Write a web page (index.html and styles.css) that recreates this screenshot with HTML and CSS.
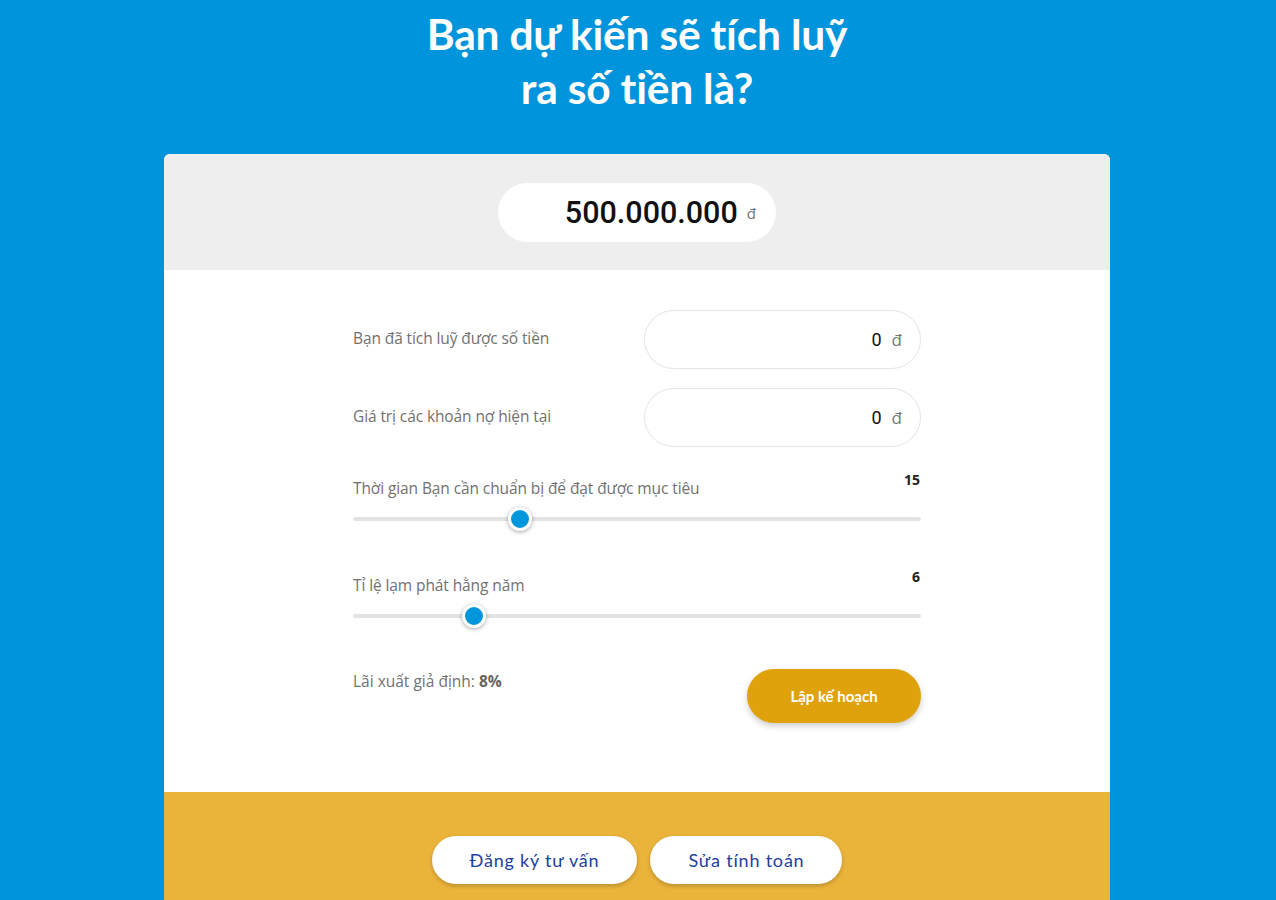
FILE: index.html
```
<!DOCTYPE html>
<html lang="vi">
<head>
	<meta charset="UTF-8">
	<title>Tích luỹ</title>
	<link rel="stylesheet" href="styles.css">
</head>
<body>
	<div class="page">
		<h1 class="title">Bạn dự kiến sẽ tích luỹ<br>ra số tiền là?</h1>

		<section class="card">
			<div class="card-head">
				<div class="goal">
					<span class="goal-num">500.000.000</span>
					<span class="goal-unit">đ</span>
				</div>
			</div>

			<div class="card-body">
				<div class="form">
					<div class="row">
						<label class="label">Bạn đã tích luỹ được số tiền</label>
						<div class="money">
							<span class="money-num">0</span>
							<span class="money-unit">đ</span>
						</div>
					</div>
					<div class="row">
						<label class="label">Giá trị các khoản nợ hiện tại</label>
						<div class="money">
							<span class="money-num">0</span>
							<span class="money-unit">đ</span>
						</div>
					</div>

					<div class="slide">
						<div class="slide-top">
							<label class="label">Thời gian Bạn cần chuẩn bị để đạt được mục tiêu</label>
							<span class="slide-val">15</span>
						</div>
						<input class="range" type="range" min="1" max="50" value="15">
					</div>

					<div class="slide">
						<div class="slide-top">
							<label class="label">Tỉ lệ lạm phát hằng năm</label>
							<span class="slide-val">6</span>
						</div>
						<input class="range" type="range" min="0" max="30" value="6">
					</div>

					<div class="foot-row">
						<p class="rate">Lãi xuất giả định: <b>8%</b></p>
						<button class="btn-plan">Lập kế hoạch</button>
					</div>
				</div>
			</div>

			<div class="card-foot">
				<button class="btn-white">Đăng ký tư vấn</button>
				<button class="btn-white">Sửa tính toán</button>
			</div>
		</section>
	</div>
</body>
</html>
```

FILE: styles.css
```
* {
	margin:0;
	padding:0;
	box-sizing:border-box;
}
html,body {
	height:100%;
	overflow:hidden;
}
body {
	background:#0094dc;
	font-family:"Open Sans","Liberation Sans",sans-serif;
	color:#222;
}
.page {
	width:946px;
	margin:0 auto;
	padding-top:7px;
	position:relative;
	left:-1px;
}
.title {
	text-align:center;
	color:#fff;
	font-family:"Lato","Open Sans",sans-serif;
	font-weight:700;
	font-size:42.5px;
	line-height:54px;
	letter-spacing:-0.2px;
}
.card {
	margin-top:39px;
	background:#fff;
	border-radius:6px;
	overflow:hidden;
}
.card-head {
	height:116px;
	background:#eeeeee;
	display:flex;
	align-items:center;
	justify-content:center;
}
.goal {
	width:278px;
	height:59px;
	background:#fff;
	border-radius:30px;
	display:flex;
	align-items:center;
	justify-content:flex-end;
	padding-right:20px;
	gap:9px;
}
.goal-num {
	font-family:"Roboto","Liberation Sans",sans-serif;
	font-size:30.5px;
	font-weight:500;
	color:#111;
}
.goal-unit {
	font-size:15px;
	color:#777;
	margin-top:2px;
}
.card-body {
	height:522px;
	padding-top:40px;
}
.form {
	width:568px;
	margin:0 auto;
}
.row {
	display:flex;
	align-items:center;
	justify-content:space-between;
	margin-bottom:19px;
}
.label {
	font-size:15.5px;
	color:#717171;
	letter-spacing:-0.1px;
	margin-top:-3px;
}
.money {
	width:277px;
	height:59px;
	border:1px solid #e4e4e4;
	border-radius:30px;
	display:flex;
	align-items:center;
	justify-content:flex-end;
	padding-right:18px;
	gap:10px;
}
.money-num {
	font-family:"Roboto","Liberation Sans",sans-serif;
	font-size:18px;
	color:#111;
}
.money-unit {
	font-size:17px;
	color:#777;
}
.slide {
	padding-top:4px;
	margin-bottom:31px;
}
.slide-top {
	display:flex;
	justify-content:space-between;
	align-items:flex-start;
	height:36px;
}
.slide-top .label {
	margin-top:7px;
}
.slide-val {
	font-size:14px;
	font-weight:700;
	color:#222;
	padding-right:1px;
}
.range {
	-webkit-appearance:none;
	appearance:none;
	display:block;
	width:100%;
	height:26px;
	background:transparent;
	margin:0;
}
.range::-webkit-slider-runnable-track {
	height:4px;
	background:#e3e3e3;
	border-radius:2px;
}
.range::-webkit-slider-thumb {
	-webkit-appearance:none;
	width:24px;
	height:24px;
	margin-top:-10px;
	border-radius:50%;
	background:#0096dc;
	border:3px solid #fff;
	box-shadow:0 1px 4px rgba(0,0,0,.35);
}
.foot-row {
	display:flex;
	justify-content:space-between;
	align-items:flex-start;
	padding-top:9px;
}
.rate {
	font-size:15.5px;
	color:#717171;
	padding-top:1px;
}
.rate b {
	color:#666;
}
.btn-plan {
	width:174px;
	height:54px;
	border:none;
	border-radius:27px;
	background:#e0a20b;
	color:#fff;
	font-family:"Lato","Open Sans",sans-serif;
	font-weight:700;
	font-size:15px;
	box-shadow:0 3px 6px rgba(0,0,0,.2);
}
.card-foot {
	height:140px;
	background:#eab33a;
	display:flex;
	justify-content:center;
	gap:13px;
	padding-top:44px;
}
.btn-white {
	height:48px;
	border:none;
	border-radius:24px;
	background:#fff;
	color:#1d3f9c;
	font-family:"Lato","Open Sans",sans-serif;
	font-size:18px;
	letter-spacing:0.8px;
	padding:0 38px;
	box-shadow:0 2px 4px rgba(0,0,0,.2);
}
```
